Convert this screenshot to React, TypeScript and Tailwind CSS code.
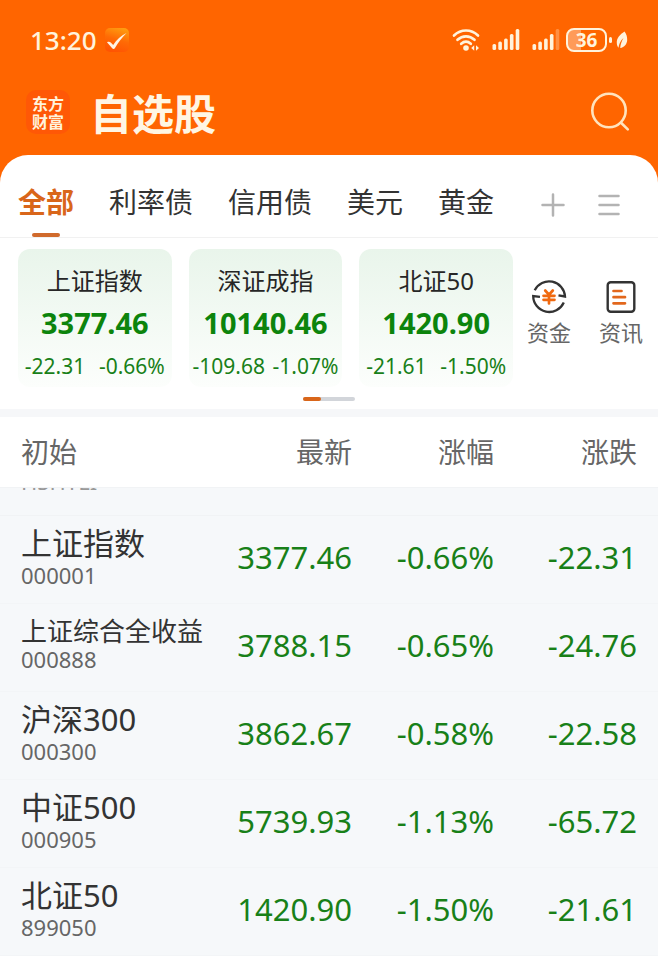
import { clsx } from "clsx";

const tabs = ["全部", "利率债", "信用债", "美元", "黄金"];

const indexes = [
  { name: "上证指数", price: "3377.46", change: "-22.31", percent: "-0.66%" },
  { name: "深证成指", price: "10140.46", change: "-109.68", percent: "-1.07%" },
  { name: "北证50", price: "1420.90", change: "-21.61", percent: "-1.50%" },
];

const stocks = [
  { name: "上证指数", code: "000001", price: "3377.46", percent: "-0.66%", change: "-22.31" },
  { name: "上证综合全收益", code: "000888", price: "3788.15", percent: "-0.65%", change: "-24.76" },
  { name: "沪深300", code: "000300", price: "3862.67", percent: "-0.58%", change: "-22.58" },
  { name: "中证500", code: "000905", price: "5739.93", percent: "-1.13%", change: "-65.72" },
  { name: "北证50", code: "899050", price: "1420.90", percent: "-1.50%", change: "-21.61" },
];

function CheckBadge() {
  return (
    <svg width="24" height="24" viewBox="0 0 24 24" aria-hidden="true">
      <defs>
        <linearGradient id="badge" x1="0.7" y1="0" x2="0.4" y2="1">
          <stop offset="0" stopColor="#ff9d10" />
          <stop offset="0.5" stopColor="#ff6a05" />
          <stop offset="1" stopColor="#ff5402" />
        </linearGradient>
      </defs>
      <rect width="24" height="24" rx="5" fill="url(#badge)" />
      <path d="M2 14.2c1.600-.8 3-.6 4 .6l2.200 2.200C11.500 12 16 7.500 21.500 5 17 9.500 13 14.500 10 20c-.8 1.200-2 1.200-2.800.2z" fill="#fff3e4" />
    </svg>
  );
}

function Wifi() {
  return (
    <svg width="28" height="24" viewBox="0 0 28 24" fill="none" stroke="#fff3dc" strokeWidth="2.700" strokeLinecap="round" aria-hidden="true">
      <path d="M2 7.500C9 .8 19 .8 26 7.500" />
      <path d="M5.500 11.800c5-4.600 12-4.600 17 0" />
      <path d="M9.200 15.800c3-2.600 6.600-2.600 9.600 0" />
      <circle cx="14" cy="20" r="2.800" fill="#fff3dc" stroke="none" />
      <path d="M19.200 20l3-2.700v5.400zM27 20l-3-2.700v5.400z" fill="#fff3dc" stroke="none" />
    </svg>
  );
}

function Signal({ weak = false }: { weak?: boolean }) {
  return (
    <svg width="28" height="24" viewBox="0 0 28 24" fill="#fff3dc" aria-hidden="true">
      <rect x="0.500" y="16" width="3.600" height="6" rx="1.500" />
      <rect x="6.300" y="13.500" width="3.600" height="8.500" rx="1.500" />
      <rect x="12.100" y="10.500" width="3.600" height="11.500" rx="1.500" />
      <rect x="17.900" y="6" width="3.600" height="16" rx="1.500" />
      <rect x="23.700" y="1" width="3.600" height="21" rx="1.500" opacity={weak ? 0.3 : 1} />
    </svg>
  );
}

function Leaf() {
  return (
    <svg width="12" height="18" viewBox="0 0 12 18" aria-hidden="true">
      <path d="M8.500.5C4 3.500.5 7 .8 12c.1 2 .7 3.600 1.700 4.800C3 13 4.500 9.500 7.500 7 5.500 10.500 4.500 13.500 4.200 17 8.500 16.500 11 13 11.200 9 11.300 6 10.500 3 8.500.5z" fill="#fff3dc" />
    </svg>
  );
}

function SearchIcon() {
  return (
    <svg width="40" height="40" viewBox="0 0 40 40" fill="none" stroke="currentColor" strokeWidth="2.600" strokeLinecap="round" aria-hidden="true">
      <circle cx="19" cy="18.500" r="16.700" />
      <path d="M31 30.800l6.800 6.600" />
    </svg>
  );
}

function FundsIcon() {
  return (
    <svg width="36" height="36" viewBox="0 0 36 36" fill="none" stroke="#333" strokeWidth="2.300" aria-hidden="true">
      <path d="M3.700 11.200A16 16 0 0 1 34 17.500L27.500 16.300" />
      <path d="M32.800 23.500A16 16 0 0 1 2.200 17L9 17.800" />
      <path d="M14.200 11.500l3.800 4.200 3.800-4.200M12.500 16.800h11M12.500 20.800h11M18 16v8.500" stroke="#f0690f" strokeWidth="2.700" strokeLinecap="round" />
    </svg>
  );
}

function NewsIcon() {
  return (
    <svg width="30" height="36" viewBox="0 0 30 36" fill="none" strokeWidth="2.400" aria-hidden="true">
      <rect x="1.700" y="3.200" width="26.600" height="29.600" rx="3" stroke="#333" />
      <path d="M7.500 12h8M7.500 18.200h11.500M7.500 24.300h11.500" stroke="#e2671c" strokeWidth="2.700" strokeLinecap="round" />
    </svg>
  );
}

export default function App() {
  return (
    <div className="min-h-screen bg-[#ff6500] font-['Noto_Sans','Noto_Sans_CJK_SC',sans-serif] text-[#333]">
      {/* Status bar */}
      <div className="flex h-20 items-center justify-between px-[30px] text-[#fff3dc]">
        <div className="flex items-center gap-2">
          <span className="text-[26px] leading-8 font-medium">13:20</span>
          <CheckBadge />
        </div>
        <div className="flex items-center gap-1.5">
          <div className="flex items-center gap-3">
            <Wifi />
            <Signal />
            <Signal weak />
          </div>
          <div className="flex items-center">
            <span className="flex h-6 w-[41px] items-center justify-center rounded-lg border-2 bg-linear-to-r from-white/35 from-35% to-transparent to-35% text-[19px] font-bold">
              36
            </span>
            <span className="ml-[2px] h-[6px] w-[3px] rounded-sm bg-[#fff3dc]" />
            <span className="ml-1">
              <Leaf />
            </span>
          </div>
        </div>
      </div>

      {/* Title */}
      <header className="flex h-[75px] items-center justify-between pr-7 pb-3 pl-[26px]">
        <div className="flex items-center gap-5">
          <div className="flex size-11 flex-col items-center justify-center rounded-[10px] bg-[#ff5806] font-['Noto_Sans_CJK_SC',sans-serif] text-base leading-[18px] font-bold text-[#fff3dc]">
            <span>东方</span>
            <span>财富</span>
          </div>
          <h1 className="font-['Noto_Sans_CJK_SC',sans-serif] text-[42px] leading-[60px] font-bold text-[#fff6e4]">
            自选股
          </h1>
        </div>
        <button aria-label="搜索" className="text-[#ffe3bd]">
          <SearchIcon />
        </button>
      </header>

      <main className="rounded-t-[28px] bg-white">
        {/* Group tabs */}
        <nav className="flex h-[83px] items-center gap-[35px] border-b border-[#f1f1f1] pt-3 pl-[18px]">
          {tabs.map((tab, idx) => (
            <button
              key={tab}
              className={clsx(
                "relative flex h-full items-center text-[28px]",
                idx === 0 && "font-bold text-[#d9661a]"
              )}
            >
              {tab}
              {idx === 0 && (
                <span className="absolute bottom-0 left-1/2 h-1 w-7 -translate-x-1/2 rounded-full bg-[#d06a2c]" />
              )}
            </button>
          ))}
          <div className="ml-3 flex items-center gap-8 pt-1.5 text-[#b3b3b3]">
            <button aria-label="添加">
              <svg width="24" height="24" viewBox="0 0 24 24" stroke="currentColor" strokeWidth="2.500" strokeLinecap="round">
                <path d="M12 1.500v21M1.500 12h21" />
              </svg>
            </button>
            <button aria-label="菜单">
              <svg width="24" height="24" viewBox="0 0 24 24" stroke="currentColor" strokeWidth="2.500" strokeLinecap="round">
                <path d="M2.500 3h19M2.500 12h19M2.500 21h19" />
              </svg>
            </button>
          </div>
        </nav>

        {/* Index cards */}
        <section className="border-b-8 border-[#f6f7f9] pt-[11px] pb-2">
          <div className="flex items-center pl-[18px]">
            <div className="grid flex-1 grid-cols-3 gap-[17px]">
              {indexes.map((item) => (
                <div
                  key={item.name}
                  className="flex h-[138px] flex-col items-center rounded-xl bg-linear-to-b from-[#e9f5eb] to-[#fcfefc] pt-4"
                >
                  <div className="text-2xl leading-8 text-[#262626]">{item.name}</div>
                  <div className="mt-2 text-[29px] leading-9 font-bold text-[#0c840c]">{item.price}</div>
                  <div className="mt-[11px] flex w-full justify-around text-[21px] leading-7 text-[#188018]">
                    <span>{item.change}</span>
                    <span>{item.percent}</span>
                  </div>
                </div>
              ))}
            </div>
            <div className="flex w-[145px] shrink-0 justify-between pr-[15px] pb-3 pl-[14px] text-[22px] leading-7 text-[#666]">
              <button className="flex flex-col items-center gap-[3px]">
                <FundsIcon />
                资金
              </button>
              <button className="flex flex-col items-center gap-[3px]">
                <NewsIcon />
                资讯
              </button>
            </div>
          </div>
          <div className="mx-auto mt-[10px] h-1 w-[52px] rounded-full bg-[#d2d5da]">
            <div className="h-1 w-[18px] rounded-full bg-[#d9661a]" />
          </div>
        </section>

        {/* Watch list */}
        <table className="w-full table-fixed">
          <thead>
            <tr className="h-[70px] text-right text-[28px] text-[#666]">
              <th className="pl-[21px] text-left font-normal">初始</th>
              <th className="w-[142px] font-normal">最新</th>
              <th className="w-[142px] font-normal">涨幅</th>
              <th className="w-[164px] pr-[21px] font-normal">涨跌</th>
            </tr>
          </thead>
          <tbody className="bg-[#f6f8fa]">
            <tr className="border-y border-[#f1f3f5]">
              <td colSpan={4} className="pl-[21px]">
                {/* row scrolled under the header */}
                <div className="flex h-[27px] items-end overflow-hidden pb-5 text-[22px] leading-7 text-[#999]">
                  HSHYLI
                </div>
              </td>
            </tr>
            {stocks.map((stock) => (
              <tr key={stock.code} className="h-[88px] border-b border-[#f3f5f7] text-right text-[31px] text-[#188018]">
                <td className="pb-1 pl-[21px] text-left whitespace-nowrap">
                  <div className={clsx("text-[#333]", stock.name.length > 5 ? "text-[26px] leading-7" : "leading-9")}>
                    {stock.name}
                  </div>
                  <div className="text-[22px] leading-7 text-[#666]">{stock.code}</div>
                </td>
                <td className="pb-1">{stock.price}</td>
                <td className="pb-1">{stock.percent}</td>
                <td className="pr-[21px] pb-1">{stock.change}</td>
              </tr>
            ))}
          </tbody>
        </table>
      </main>
    </div>
  );
}
